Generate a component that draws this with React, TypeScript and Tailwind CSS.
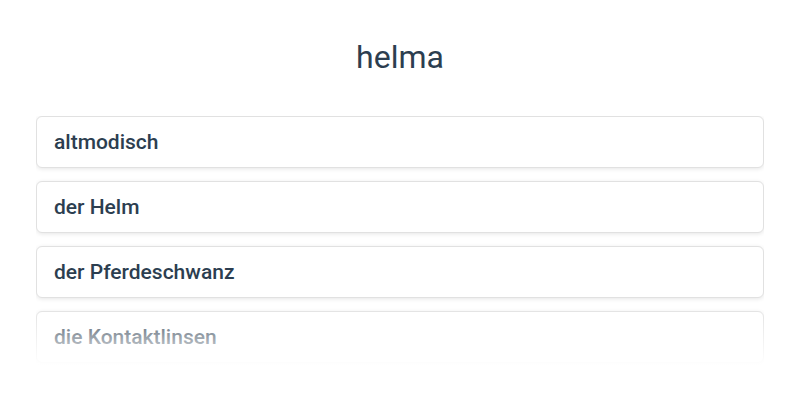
const words = ["altmodisch", "der Helm", "der Pferdeschwanz", "die Kontaktlinsen"];

export default function App() {
  return (
    <div className="h-[400px] w-[800px] bg-white font-['Roboto',sans-serif] text-[#2c3e50]">
      <h1 className="pt-[37px] text-center text-[32px] leading-[40px] font-normal text-[#2c3e50]">helma</h1>

      <div className="relative mx-[36px] mt-[39px] h-[250px] overflow-hidden">
        <div className="flex flex-col gap-[13px]">
          {words.map((w) => (
            <div
              key={w}
              className="flex h-[52px] shrink-0 items-center rounded-md border border-[#e1e1e1] bg-white px-[17px] pt-[2px] text-[21px] font-medium text-[#2c3e50] shadow-[0_1px_4px_rgba(0,0,0,0.1)]"
            >
              {w}
            </div>
          ))}
        </div>
        {/* fade out at the bottom of the list */}
        <div className="pointer-events-none absolute inset-x-0 bottom-0 h-[60px] bg-gradient-to-b from-white/0 via-white/50 to-white" />
      </div>
    </div>
  );
}
